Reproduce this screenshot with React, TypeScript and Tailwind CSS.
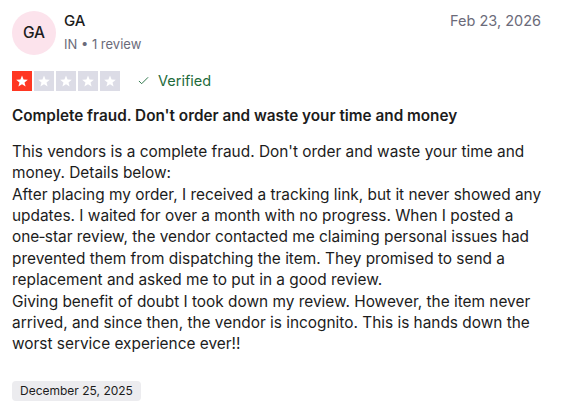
import React from "react";

const Star = ({ filled }: { filled: boolean }) => (
  <div className={`flex h-5 w-5 items-center justify-center ${filled ? "bg-[#ff3722]" : "bg-[#dcdce6]"}`}>
    <svg viewBox="0 0 24 24" className="h-[14px] w-[14px]" fill="#ffffff">
      <path d="M12 2.5l2.7 6.9 7.3.4-5.7 4.6 1.9 7.1L12 17.5l-6.2 4 1.9-7.1L2 9.8l7.3-.4z" />
    </svg>
  </div>
);

const para2 =
  "After placing my order, I received a tracking link, but it never showed any updates. I waited for over a month with no progress. When I posted a one\u2011star review, the vendor contacted me claiming personal issues had prevented them from dispatching the item. They promised to send a replacement and asked me to put in a good review.";

export default function App() {
  return (
    <div className="min-h-[407px] w-[577px] bg-white pl-3 pr-6 pt-[11px] text-[#1c1c1c]" style={{ fontFamily: "Inter, 'Noto Sans', sans-serif" }}>
      <div className="flex items-start">
        <div className="flex h-[44px] w-[44px] shrink-0 items-center justify-center rounded-full bg-[#fce3ec] text-[15.5px] font-medium text-[#1c1c1c]">
          GA
        </div>
        <div className="ml-2 flex flex-col">
          <div className="text-[15px] font-medium leading-5">GA</div>
          <div className="mt-[3px] text-[13px] leading-5 text-[#6b6b7a]">IN • 1 review</div>
        </div>
        <div className="ml-auto pr-3 text-[14.5px] leading-5 text-[#6b6b7a]">Feb 23, 2026</div>
      </div>
      <div className="mt-[15px] flex items-center">
        <div className="flex gap-[2px]">
          <Star filled />
          <Star filled={false} />
          <Star filled={false} />
          <Star filled={false} />
          <Star filled={false} />
        </div>
        <div className="ml-[18px] flex items-center gap-[9px] text-[14.5px] text-[#1e6b3c]">
          <svg viewBox="0 0 12 12" className="h-[11px] w-[11px]" fill="none" stroke="#1e6b3c" strokeWidth="1">
            <path d="M1 6.5l3 3L11 2.5" />
          </svg>
          <span>Verified</span>
        </div>
      </div>
      <h2 className="mt-[14px] text-[15.3px] font-semibold leading-5">
        Complete fraud. Don't order and waste your time and money
      </h2>
      <div className="mt-[15px] text-[15.4px] leading-[21.4px]">
        <p>This vendors is a complete fraud. Don't order and waste your time and money. Details below:</p>
        <p>{para2}</p>
        <p>Giving benefit of doubt I took down my review. However, the item never arrived, and since then, the vendor is incognito. This is hands down the worst service experience ever!!</p>
      </div>
      <div className="mt-[26px] inline-block rounded bg-[#ececef] px-2 py-[1px] text-[12px] leading-[18px]">
        December 25, 2025
      </div>
    </div>
  );
}
